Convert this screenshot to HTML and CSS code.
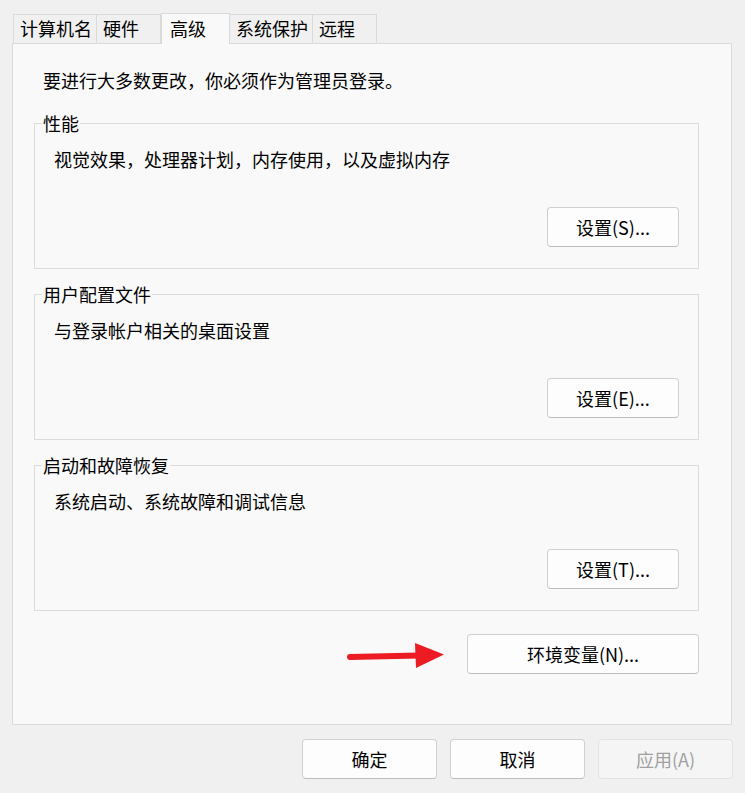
FILE: index.html
```html
<!DOCTYPE html>
<html lang="zh-CN">

<head>
    <meta charset="UTF-8">
    <meta name="viewport" content="width=device-width, initial-scale=1.0">
    <title>系统属性</title>
    <link rel="stylesheet" href="styles.css">
</head>

<body>
    <div class="dialog">
        <div class="tabs">
            <div class="tab">计算机名</div>
            <div class="tab">硬件</div>
            <div class="tab active">高级</div>
            <div class="tab">系统保护</div>
            <div class="tab">远程</div>
        </div>

        <div class="panel">
            <div class="intro">要进行大多数更改，你必须作为管理员登录。</div>

            <fieldset class="group">
                <legend>性能</legend>
                <div class="desc">视觉效果，处理器计划，内存使用，以及虚拟内存</div>
                <div class="group-actions">
                    <button class="btn">设置(S)...</button>
                </div>
            </fieldset>

            <fieldset class="group">
                <legend>用户配置文件</legend>
                <div class="desc">与登录帐户相关的桌面设置</div>
                <div class="group-actions">
                    <button class="btn">设置(E)...</button>
                </div>
            </fieldset>

            <fieldset class="group">
                <legend>启动和故障恢复</legend>
                <div class="desc">系统启动、系统故障和调试信息</div>
                <div class="group-actions">
                    <button class="btn">设置(T)...</button>
                </div>
            </fieldset>

            <div class="env-row">
                <svg class="arrow" width="100" height="30" viewBox="0 0 100 30">
                    <path d="M3 18 L72 16.5" stroke="#ed1c24" stroke-width="6" stroke-linecap="round" fill="none" />
                    <path d="M68 4 L97 15.5 L69 29 Z" fill="#ed1c24" />
                </svg>
                <button class="btn btn-wide">环境变量(N)...</button>
            </div>
        </div>

        <div class="footer">
            <button class="btn btn-foot">确定</button>
            <button class="btn btn-foot">取消</button>
            <button class="btn btn-foot" disabled>应用(A)</button>
        </div>
    </div>
</body>

</html>
```

FILE: styles.css
```css
body {
    margin: 0;
    background-color: #f0f0f0;
    font-family: "Noto Sans CJK SC", "Noto Sans", sans-serif;
    font-size: 18px;
    line-height: 24px;
    color: #000;
}

.dialog {
    width: 745px;
    height: 793px;
    overflow: hidden;
    border-bottom-left-radius: 8px;
    border-bottom-right-radius: 8px;
}

/* tab strip */
.tabs {
    display: flex;
    align-items: flex-end;
    padding: 12px 0 0 13px;
    height: 31px;
}

.tab {
    box-sizing: border-box;
    height: 29px;
    min-width: 64px;
    padding: 1px 4px 0 6px;
    border: 1px solid #dadada;
    border-bottom: none;
    border-left: none;
    background-color: #f0f0f0;
    white-space: nowrap;
}

.tab:first-child {
    border-left: 1px solid #dadada;
}

.tab.active {
    height: 31px;
    min-width: 69px;
    padding: 2px 8px 0 8px;
    background-color: #f9f9f9;
    border-left: 1px solid #dadada;
    margin-bottom: -1px;
    position: relative;
    z-index: 1;
}

.tab.active + .tab {
    border-left: none;
}

/* tab content */
.panel {
    box-sizing: border-box;
    height: 682px;
    margin: 0 13px 0 12px;
    border: 1px solid #dadada;
    background-color: #f9f9f9;
    padding: 24px 32px 0 21px;
}

.intro {
    padding-left: 9px;
}

.group {
    margin: 19px 0 0 0;
    padding: 0 0 21px 0;
    border: 1px solid #dcdcdc;
    min-width: 0;
}

.group + .group {
    margin-top: 13px;
}

.group legend {
    margin-left: 7px;
    padding: 0 1px;
}

.desc {
    padding: 12px 0 0 19px;
}

.group-actions {
    display: flex;
    justify-content: flex-end;
    margin-top: 36px;
    padding-right: 19px;
}

.btn {
    box-sizing: border-box;
    height: 40px;
    width: 132px;
    font-family: inherit;
    font-size: 18px;
    color: #000;
    background-color: #fdfdfd;
    border: 1px solid #d0d0d0;
    border-bottom-color: #bdbdbd;
    border-radius: 4px;
    padding: 0;
}

.btn:disabled {
    color: #a0a0a0;
    background-color: #f5f5f5;
    border-color: #e3e3e3;
}

.env-row {
    display: flex;
    align-items: center;
    justify-content: flex-end;
    margin-top: 23px;
}

.arrow {
    margin-right: 20px;
}

.btn-wide {
    width: 232px;
}

.footer {
    display: flex;
    justify-content: flex-end;
    gap: 13px;
    padding: 14px 12px 0 0;
}

.btn-foot {
    width: 135px;
}
```
